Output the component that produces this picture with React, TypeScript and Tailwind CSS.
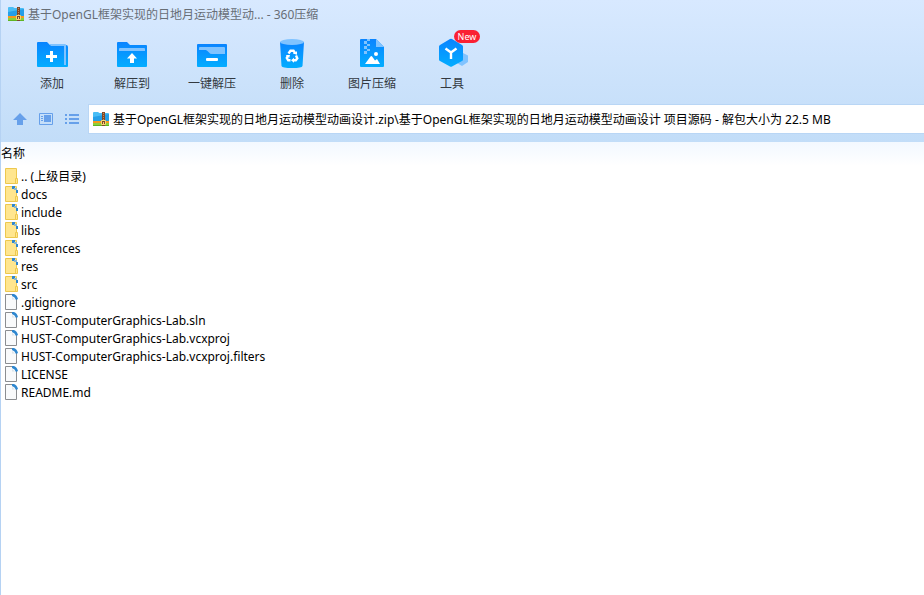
import React, { useState } from "react";

interface Entry {
  name: string;
  kind: "up" | "folder" | "file";
}

interface Tool {
  label: string;
  icon: React.ReactNode;
  isNew?: boolean;
}

const entries: Entry[] = [
  { name: ".. (上级目录)", kind: "up" },
  { name: "docs", kind: "folder" },
  { name: "include", kind: "folder" },
  { name: "libs", kind: "folder" },
  { name: "references", kind: "folder" },
  { name: "res", kind: "folder" },
  { name: "src", kind: "folder" },
  { name: ".gitignore", kind: "file" },
  { name: "HUST-ComputerGraphics-Lab.sln", kind: "file" },
  { name: "HUST-ComputerGraphics-Lab.vcxproj", kind: "file" },
  { name: "HUST-ComputerGraphics-Lab.vcxproj.filters", kind: "file" },
  { name: "LICENSE", kind: "file" },
  { name: "README.md", kind: "file" },
];

const ArchiveIcon = () => (
  <svg width="16" height="16" viewBox="0 0 16 16" className="shrink-0">
    <path d="M0 2Q0 1 1 1H5L6.5 2H15Q16 2 16 3V11H0Z" fill="#49bdf5" />
    <path d="M0 6L16 3V11H0Z" fill="#259fe8" />
    <path d="M0 10H16V12H0Z" fill="#f59a1c" />
    <path d="M0 12H16V14H0Z" fill="#8bd03a" />
    <path d="M0 14H16V15H0Z" fill="#5fb422" />
    <path d="M9 1H12V15H9Z" fill="#80492a" />
    <path d="M10 2H11V3H10ZM10 4H11V5H10ZM10 6H11V7H10ZM10 8H11V9H10Z" fill="#c98a54" />
    <path d="M8.500 9.500H12.500V13.500H8.500Z" fill="#80492a" stroke="#f7d673" />
    <path d="M10 11H11V14H10Z" fill="#f7d673" />
  </svg>
);

// shared vertical gradient for all the toolbar drawings
const Blue = ({ id }: { id: string }) => (
  <defs>
    <linearGradient id={id} x1="0" y1="0" x2="0" y2="1">
      <stop offset="0" stopColor="#0a84ff" />
      <stop offset="1" stopColor="#03adff" />
    </linearGradient>
  </defs>
);

const AddIcon = () => (
  <svg width="36" height="36" viewBox="0 0 36 36">
    <Blue id="add" />
    <path d="M3 7Q3 6 4 6H13L16 9H32Q34 9 34 11V30Q34 31 33 31H4Q3 31 3 30Z" fill="url(#add)" />
    <path d="M15 8H31Q32 8 32 9V29H30V10H17Z" fill="#80c3ff" />
    <path d="M16 15H19V19H23V22H19V26H16V22H12V19H16Z" fill="#fff" />
  </svg>
);

const ExtractIcon = () => (
  <svg width="36" height="36" viewBox="0 0 36 36">
    <Blue id="extract" />
    <path d="M3 7Q3 6 4 6H13L16 9H32Q33 9 33 10V30Q33 31 32 31H4Q3 31 3 30Z" fill="url(#extract)" />
    <path d="M5 13Q5 12 6 12H30Q31 12 31 13V15H5Z" fill="#80c3ff" />
    <path d="M18 17L23 22.5H20V27H16V22.5H13Z" fill="#fff" />
  </svg>
);

const OneClickIcon = () => (
  <svg width="36" height="36" viewBox="0 0 36 36">
    <Blue id="oneclick" />
    <rect x="3" y="8" width="30" height="23" rx="1" fill="url(#oneclick)" />
    <path d="M5 12Q5 11 6 11H30Q31 11 31 12V18H18Q16 18 15 16.5T12 14H5Z" fill="#80c3ff" />
    <rect x="12" y="22" width="12" height="3" rx="1" fill="#fff" />
  </svg>
);

const DeleteIcon = () => (
  <svg width="36" height="36" viewBox="0 0 36 36">
    <Blue id="trash" />
    <path d="M6 6H30L28.5 30Q28 32 18 32T7.5 30Z" fill="url(#trash)" />
    <ellipse cx="18" cy="6" rx="12" ry="3" fill="#80c3ff" />
    <g fill="none" stroke="#fff" strokeWidth="2.4">
      <path d="M14.500 17.500L16.500 14.700H19.500L21 17" />
      <path d="M22 19.500L23.300 22.300L21.800 24.300H19.500" />
      <path d="M16.500 24.300H14.200L12.800 22L14 19.500" />
    </g>
    <path d="M18.800 17.600L23 15.200V18.800ZM20 21.800V26.800L17 24.300ZM11.800 19H16L15.200 22Z" fill="#fff" />
  </svg>
);

const PictureIcon = () => (
  <svg width="36" height="36" viewBox="0 0 36 36">
    <Blue id="picture" />
    <path d="M6 4Q6 3 7 3H22L30 11V30Q30 31 29 31H7Q6 31 6 30Z" fill="url(#picture)" />
    <path d="M22 3L30 11H22Z" fill="#80c3ff" />
    <path d="M13 3H16V5H13ZM10 5H13V8H10ZM13 8H16V10H13ZM10 10H13V13H10ZM13 13H16V15H13ZM10 15H13V18H10Z" fill="#80c3ff" />
    <circle cx="22" cy="18" r="2" fill="#fff" />
    <path d="M11 28L16.500 20.500Q17.500 19.500 18.500 21L21 24.500L23 23L26 28Z" fill="#fff" />
  </svg>
);

const ToolsIcon = () => (
  <svg width="36" height="36" viewBox="0 0 36 36">
    <Blue id="tools" />
    <path d="M27 16L34 19.500V26L28 30L23 27Z" fill="#80c3ff" />
    <path d="M16 3Q17 2.500 18 3L28 9Q29 9.500 29 10.500V23.500Q29 24.500 28 25L18 30.500Q17 31 16 30.500L6 25Q5 24.500 5 23.500V10.500Q5 9.500 6 9Z" fill="url(#tools)" />
    <path d="M11.500 12.500L17 16.500L22.500 12.500M17 16.500V23" fill="none" stroke="#fff" strokeWidth="2.4" />
  </svg>
);

const UpIcon = () => (
  <svg width="14" height="14" viewBox="0 0 14 14">
    <path d="M7 1L14 8H10V13H4V8H0Z" fill="#67a0ea" />
  </svg>
);

const PreviewIcon = () => (
  <svg width="14" height="14" viewBox="0 0 14 14">
    <path d="M.5 1.500H13.500V12.500H.5Z" fill="none" stroke="#67a0ea" />
    <path d="M2 4H4V5H2ZM2 6H4V7H2ZM2 8H4V9H2ZM5 3H12V10H5Z" fill="#67a0ea" />
  </svg>
);

const ListIcon = () => (
  <svg width="14" height="14" viewBox="0 0 14 14">
    <path d="M0 2H2V4H0ZM0 6H2V8H0ZM0 10H2V12H0ZM4 2H14V4H4ZM4 6H14V8H4ZM4 10H14V12H4Z" fill="#67a0ea" />
  </svg>
);

const EntryIcon = ({ kind }: { kind: Entry["kind"] }) => (
  <svg width="14" height="16" viewBox="0 0 14 16" className="shrink-0">
    {kind === "file" ? (
      <>
        <path d="M.5 .5H8L11.500 4V15.500H.5Z" fill="#f9fafb" stroke="#8b8d90" />
        <path d="M7 0H9Q12 1 13 5L11 6Q10 3 7 2Z" fill="#2f87cf" />
        <path d="M7 3L10 5.500H7Z" fill="#dce4ea" />
      </>
    ) : (
      <>
        <path d="M.5 .5H11.500V15.500H.5Z" fill="#ffe68f" stroke="#edc84e" />
        <path d="M10.500 10.500H12.500V15.500H10.500Z" fill="#ffe68f" stroke="#edc84e" />
        {kind === "folder" && (
          <>
            <path d="M7 0H10V3H7ZM11 4H13V7H11Z" fill="#2f87cf" />
            <path d="M9 2H12V4H9Z" fill="#8cb7cf" />
          </>
        )}
      </>
    )}
  </svg>
);

const tools: Tool[] = [
  { label: "添加", icon: <AddIcon /> },
  { label: "解压到", icon: <ExtractIcon /> },
  { label: "一键解压", icon: <OneClickIcon /> },
  { label: "删除", icon: <DeleteIcon /> },
  { label: "图片压缩", icon: <PictureIcon /> },
  { label: "工具", icon: <ToolsIcon />, isNew: true },
];

const App: React.FC = () => {
  const [path, setPath] = useState(
    "基于OpenGL框架实现的日地月运动模型动画设计.zip\\基于OpenGL框架实现的日地月运动模型动画设计 项目源码 - 解包大小为 22.5 MB"
  );

  return (
    <div className="min-h-screen border-l border-[#b5d2f3] bg-white font-['Noto_Sans','Noto_Sans_CJK_SC',sans-serif] text-xs text-black">
      <header className="bg-linear-to-b from-[#d8e9ff] to-[#c2ddf8]">
        <div className="flex h-7 items-center gap-1 pl-[7px] text-[#686e76]">
          <ArchiveIcon />
          <h1 className="pt-[2px]">基于OpenGL框架实现的日地月运动模型动... - 360压缩</h1>
        </div>

        <nav className="flex h-[70px] pt-2 pl-[11px]">
          {tools.map((tool) => (
            <button
              key={tool.label}
              type="button"
              className="relative flex w-20 flex-col items-center gap-1 text-[#333940]"
            >
              {tool.icon}
              <span className="leading-4">{tool.label}</span>
              {tool.isNew && (
                <span className="absolute -top-1.5 right-3 flex h-[13px] w-[26px] items-center justify-center rounded-full bg-[#fa2033] text-[9px] text-white">
                  New
                </span>
              )}
            </button>
          ))}
        </nav>

        <div className="flex items-center pt-[6px] pb-2">
          <div className="flex w-[87px] gap-3 pl-3">
            <button type="button" aria-label="向上"><UpIcon /></button>
            <button type="button" aria-label="预览"><PreviewIcon /></button>
            <button type="button" aria-label="列表"><ListIcon /></button>
          </div>
          <div className="flex h-[30px] flex-1 items-center gap-1 border border-r-0 border-[#b9d6f5] bg-white pl-1">
            <ArchiveIcon />
            <input
              aria-label="路径"
              value={path}
              onChange={(e) => setPath(e.target.value)}
              className="min-w-0 flex-1 bg-transparent pt-[2px] outline-none"
            />
          </div>
        </div>
      </header>

      <main className="bg-linear-to-b from-[#f2f8ff] to-white to-[24px]">
        <table className="w-full">
          <thead>
            <tr className="h-[25px]">
              <th scope="col" className="p-0 pb-[2px] text-left font-normal">名称</th>
            </tr>
          </thead>
          <tbody>
            {entries.map((entry) => (
              <tr key={entry.name}>
                <td className="p-0 pl-1">
                  <div className="flex h-[18px] items-center gap-[2px]">
                    <EntryIcon kind={entry.kind} />
                    <span className="pt-[2px]">{entry.name}</span>
                  </div>
                </td>
              </tr>
            ))}
          </tbody>
        </table>
      </main>
    </div>
  );
};

export default App;
